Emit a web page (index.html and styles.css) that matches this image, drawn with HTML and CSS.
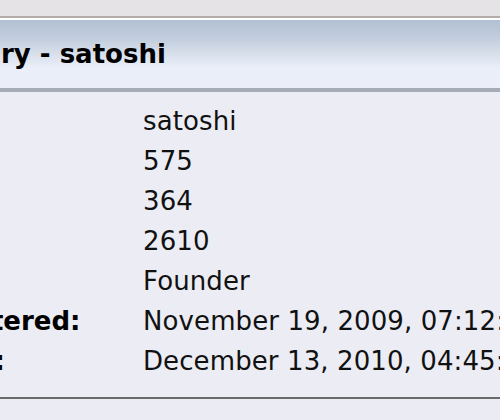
FILE: index.html
```html
<!DOCTYPE html>
<html>
<head>
<meta charset="utf-8">
<link rel="stylesheet" href="styles.css">
</head>
<body>
<div class="topbar"></div>
<div class="card">
  <div class="catbg">Summary - satoshi</div>
  <div class="windowbg">
    <div class="grid">
      <div class="label">Name:</div><div class="value">satoshi</div>
      <div class="label">Posts:</div><div class="value">575</div>
      <div class="label">Activity:</div><div class="value">364</div>
      <div class="label">Merit:</div><div class="value">2610</div>
      <div class="label">Position:</div><div class="value">Founder</div>
      <div class="label">Date Registered:</div><div class="value">November 19, 2009, 07:12:39 PM</div>
      <div class="label">Last Active:</div><div class="value">December 13, 2010, 04:45:41 PM</div>
    </div>
  </div>
</div>
<div class="after"></div>
</body>
</html>
```

FILE: styles.css
```css
html, body {
  margin: 0;
  padding: 0;
  overflow: hidden;
  background: #ebebf3;
  font-family: "DejaVu Sans", Verdana, sans-serif;
  font-size: 26px;
  color: #111;
}
.topbar {
  height: 16px;
  background: #e6e3e6;
  border-bottom: 2px solid #b4aca8;
}
.card {
  margin-left: -170px;
  width: 900px;
  border-top: 2px solid #ffffff;
}
.catbg {
  height: 68px;
  line-height: 68px;
  padding-left: 62px;
  font-weight: bold;
  color: #000;
  white-space: nowrap;
  background: linear-gradient(to bottom, #b1c0d3 0px, #c4cfde 20px, #dbe2ed 36px, #eaeff9 48px, #ecedf8 68px);
  border-bottom: 4px solid #a5abb7;
}
.windowbg {
  background: #ececf4;
  padding: 9px 0 16px 2px;
  border-bottom: 2px solid #6a6a6a;
}
.grid {
  display: grid;
  grid-template-columns: 311px auto;
  line-height: 40px;
  white-space: nowrap;
}
.label {
  font-weight: bold;
  color: #000;
}
.value {
  color: #111;
  letter-spacing: 0.1px;
}
.after {
  height: 40px;
  background: #ebebf3;
}
```
